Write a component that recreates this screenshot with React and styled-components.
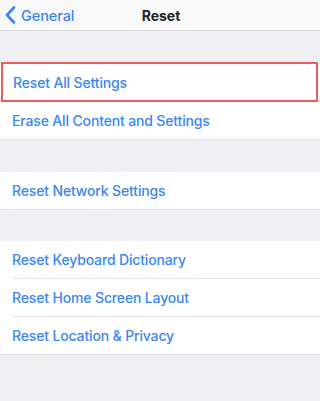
import React from "react";
import styled, { createGlobalStyle } from "styled-components";

const Global = createGlobalStyle`
  html, body { margin: 0; padding: 0; background: #efeff4; }
  body { font-family: Inter, "Liberation Sans", Arial, sans-serif; -webkit-font-smoothing: antialiased; }
`;

const Screen = styled.div`
  width: 320px;
  height: 401px;
  background: #efeff4;
  display: flex;
  flex-direction: column;
  overflow: hidden;
`;

const NavBar = styled.div`
  height: 30px;
  flex: none;
  background: #f8f8f8;
  border-bottom: 1px solid #d9d9dd;
  display: grid;
  grid-template-columns: 1fr auto 1fr;
  align-items: center;
`;

const Back = styled.div`
  display: flex;
  align-items: center;
  gap: 5px;
  padding-left: 5px;
  color: #3a86f3;
  font-size: 14.5px;
  font-weight: 500;
  letter-spacing: -0.1px;
`;

const Title = styled.div`
  color: #222;
  font-size: 14px;
  font-weight: 700;
  margin-left: 2px;
`;

const Gap = styled.div`
  flex: none;
  height: ${(p) => p.$h}px;
`;

const Group = styled.div`
  flex: none;
  background: #fff;
  display: flex;
  flex-direction: column;
  border-bottom: 1px solid #e4e4e8;
`;

const Row = styled.div`
  height: 37px;
  display: flex;
  align-items: center;
  padding-left: 12px;
  color: #3a86f3;
  font-size: 14px;
  font-weight: 500;
  letter-spacing: -0.15px;
  box-sizing: border-box;
  ${(p) =>
    p.$highlight
      ? `
    border: 2px solid #ee5a5f;
    margin: 0 2px 0 1px;
    padding-left: 10px;
    height: 40px;
  `
      : ""}
`;

const Sep = styled.div`
  height: 1px;
  margin-left: 12px;
  background: #e4e4e8;
`;

const Chevron = () => (
  <svg width="11" height="18" viewBox="0 0 11 18">
    <path d="M9 1.5 L2 9 L9 16.5" fill="none" stroke="#3a86f3" strokeWidth="2.6" strokeLinecap="round" strokeLinejoin="round" />
  </svg>
);

export default function App() {
  return (
    <Screen>
      <Global />
      <NavBar>
        <Back>
          <Chevron />
          General
        </Back>
        <Title>Reset</Title>
        <div />
      </NavBar>
      <Gap $h={31} />
      <Group>
        <Row $highlight>Reset All Settings</Row>
        <Row>Erase All Content and Settings</Row>
      </Group>
      <Gap $h={32} />
      <Group>
        <Row>Reset Network Settings</Row>
      </Group>
      <Gap $h={31} />
      <Group>
        <Row>Reset Keyboard Dictionary</Row>
        <Sep />
        <Row>Reset Home Screen Layout</Row>
        <Sep />
        <Row>Reset Location &amp; Privacy</Row>
      </Group>
    </Screen>
  );
}
